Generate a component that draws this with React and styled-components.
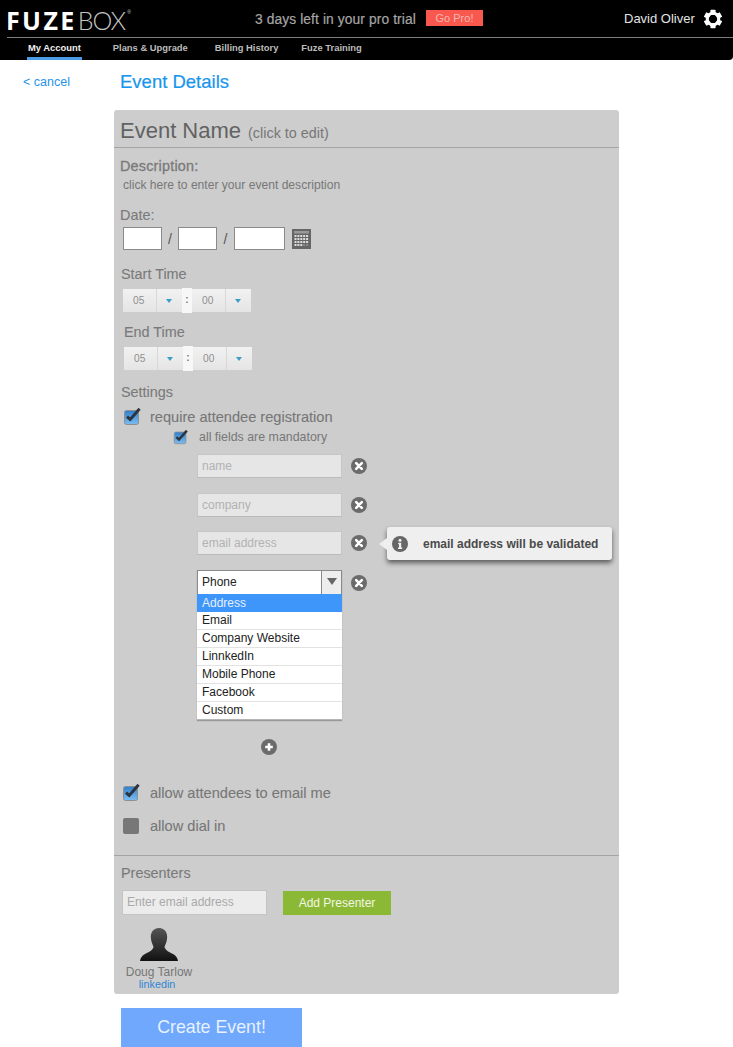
import React from "react";
import styled, { createGlobalStyle } from "styled-components";

const Global = createGlobalStyle`
  html, body { margin: 0; padding: 0; background: #fff; }
  body { font-family: "Liberation Sans", Arial, sans-serif; overflow-x: hidden; }
  * { box-sizing: border-box; }
`;

const Page = styled.div`
  width: 733px;
  height: 1047px;
  overflow: hidden;
  background: #fff;
`;

/* header */
const Header = styled.header`
  height: 60px;
  background: #000;
  border-bottom-right-radius: 4px;
  padding-left: 7px;
`;
const TopRow = styled.div`
  height: 38px;
  border-bottom: 1px solid #7d7d7d;
  display: flex;
  align-items: center;
`;
const Logo = styled.div`
  width: 248px;
  height: 38px;
  display: flex;
  align-items: center;
  font-size: 25px;
  line-height: 1;
  color: #fff;
  padding-top: 3px;
  margin-left: -1px;
  margin-right: 1px;
`;
const LogoBold = styled.span`
  font-family: "Open Sans", sans-serif;
  font-weight: 700;
  letter-spacing: 2.4px;
`;
const LogoLight = styled.span`
  font-family: Lato, sans-serif;
  font-weight: 300;
  color: #c4c4c4;
  font-size: 25px;
  letter-spacing: -1px;
  margin-left: 1px;
`;
const LogoMark = styled.sup`
  font-size: 5px;
  color: #ccc;
  align-self: flex-start;
  margin: 7px 0 0 2px;
`;
const Trial = styled.div`
  width: 171px;
  font-size: 13.8px;
  letter-spacing: 0.1px;
  font-weight: 400;
  color: #a5a5a5;
  white-space: nowrap;
  -webkit-text-stroke: 0.2px #a5a5a5;
  padding-top: 1px;
`;
const GoPro = styled.button`
  width: 57px;
  height: 16px;
  border: 0;
  padding: 0;
  background: #f8584e;
  color: #f5b7b2;
  font: 400 11px "Liberation Sans", sans-serif;
  margin-bottom: 1px;
`;
const UserName = styled.div`
  margin-left: 141px;
  width: 79px;
  color: #e4e4e4;
  font-size: 13px;
  white-space: nowrap;
`;
const Nav = styled.nav`
  height: 22px;
  display: flex;
  padding-left: 20px;
`;
const NavItem = styled.a`
  display: block;
  height: 22px;
  margin-right: ${(p) => p.$gap}px;
  padding: 0 1px;
  color: ${(p) => (p.$active ? "#f0f0f0" : "#bdbdbd")};
  font-size: 9.4px;
  font-weight: 700;
  line-height: 19px;
  white-space: nowrap;
  border-bottom: ${(p) => (p.$active ? "3px solid #4a9be8" : "0")};
`;

/* title row */
const TitleRow = styled.div`
  height: 50px;
  display: flex;
  align-items: center;
  padding-bottom: 6px;
`;
const Cancel = styled.a`
  margin-left: 23px;
  width: 97px;
  font-size: 12.5px;
  color: #1f94e6;
`;
const PageTitle = styled.h1`
  margin: 0;
  font-size: 18.5px;
  font-weight: 400;
  color: #1896ee;
  -webkit-text-stroke: 0.2px #1896ee;
`;

/* panel */
const Panel = styled.main`
  margin-left: 114px;
  width: 505px;
  height: 884px;
  background: #cdcdcd;
  border-radius: 3px;
  color: #777;
`;
const NameRow = styled.div`
  height: 38px;
  border-bottom: 1px solid #a4a4a4;
  padding-left: 6px;
  display: flex;
  align-items: baseline;
  gap: 7px;
  line-height: 42px;
`;
const EventName = styled.span`
  font-size: 22px;
  color: #626262;
`;
const ClickEdit = styled.span`
  font-size: 14.4px;
  color: #777;
`;
const Label = styled.div`
  margin-top: ${(p) => p.$top}px;
  margin-left: ${(p) => p.$left}px;
  height: 16px;
  font-size: 14.4px;
  line-height: 16px;
  letter-spacing: ${(p) => p.$track || 0}px;
  color: #7a7a7a;
  -webkit-text-stroke: ${(p) => (p.$track ? 0.3 : 0.1)}px #7a7a7a;
`;
const Hint = styled.div`
  margin: 4px 0 0 9px;
  font-size: 12.1px;
  line-height: 14px;
  color: #777;
`;
const DateRow = styled.div`
  margin: 4px 0 0 9px;
  height: 23px;
  display: flex;
  align-items: center;
`;
const DateBox = styled.div`
  width: ${(p) => p.$w}px;
  height: 23px;
  background: #fff;
  border: 1px solid #8a8a8a;
`;
const Slash = styled.span`
  width: ${(p) => p.$w}px;
  text-align: center;
  font-size: 14px;
  color: #555;
`;
const CalIcon = styled.svg`
  margin-left: 7px;
  width: 19px;
  height: 20px;
`;
const TimeRow = styled.div`
  margin: 6px 0 0 ${(p) => p.$left}px;
  height: 25px;
  width: 128px;
  display: flex;
  align-items: center;
`;
const TimeCell = styled.div`
  width: 33px;
  height: 23px;
  background: linear-gradient(#f1f1f1, #e5e5e5);
  padding-left: 10px;
  font-size: 10.2px;
  line-height: 23px;
  color: #8f8f8f;
`;
const TimeArrowCell = styled.div`
  width: 26px;
  height: 23px;
  background: linear-gradient(#f1f1f1, #e5e5e5);
  border-left: 1px solid #d8d8d8;
  display: flex;
  align-items: center;
  justify-content: center;
  padding-right: 2px;
`;
const TimeArrow = styled.i`
  width: 0;
  height: 0;
  border: 3.5px solid transparent;
  border-top: 4px solid #3b9ec8;
  border-bottom: 0;
`;
const TimeSep = styled.div`
  width: 10px;
  height: 25px;
  background: #f7f7f7;
  text-align: center;
  font-size: 10px;
  font-weight: 700;
  line-height: 23px;
  color: #777;
`;
const CheckRow = styled.div`
  margin: ${(p) => p.$top}px 0 0 ${(p) => p.$left}px;
  height: ${(p) => p.$h}px;
  display: flex;
  align-items: center;
`;
const CheckText = styled.span`
  margin-left: ${(p) => p.$gap}px;
  font-size: ${(p) => p.$size}px;
  color: #777;
  white-space: nowrap;
  -webkit-text-stroke: ${(p) => (p.$heavy ? "0.1px #777" : "0")};
`;
const FieldRow = styled.div`
  position: relative;
  margin: ${(p) => p.$top}px 0 0 83px;
  height: 24px;
  display: flex;
  align-items: center;
`;
const FieldBox = styled.div`
  width: 145px;
  height: 24px;
  background: #e6e6e6;
  border: 1px solid #c6c6c6;
  border-bottom-color: #bbb;
  padding-left: 4px;
  font-size: 12px;
  line-height: 22px;
  color: #b2b2b2;
`;
const RoundIcon = styled.svg`
  width: 16px;
  height: 16px;
  margin-left: ${(p) => p.$left || 0}px;
  margin-top: ${(p) => p.$top || 0}px;
  flex: none;
`;
const Tip = styled.div`
  position: absolute;
  left: 190px;
  top: -4px;
  width: 225px;
  height: 33px;
  border-radius: 3px;
  background: #efefef;
  box-shadow: 0 3px 5px rgba(0, 0, 0, 0.55);
  display: flex;
  align-items: center;
  padding-left: 5px;
  font-size: 12px;
  font-weight: 700;
  color: #4a4a4a;
  &::before {
    content: "";
    position: absolute;
    left: -8px;
    top: 11px;
    border: 6px solid transparent;
    border-left: 0;
    border-right: 8px solid #efefef;
  }
`;
const TipText = styled.span`
  margin-left: 15px;
  white-space: nowrap;
`;
const SelectBlock = styled.div`
  position: relative;
  margin: 15px 0 0 83px;
  display: flex;
  align-items: flex-start;
`;
const SelectCol = styled.div`
  width: 145px;
  box-shadow: 0 1px 1px rgba(0, 0, 0, 0.25);
`;
const SelectHead = styled.div`
  height: 24px;
  background: #fff;
  border: 1px solid #8a8a8a;
  border-bottom: 0;
  display: flex;
  align-items: center;
  font-size: 12px;
  color: #222;
  padding-left: 4px;
`;
const SelectValue = styled.span`
  flex: 1;
  padding-bottom: 1px;
`;
const SelectBtn = styled.div`
  width: 20px;
  height: 23px;
  background: #ededed;
  border-left: 1px solid #8a8a8a;
  display: flex;
  align-items: center;
  justify-content: center;
  padding-bottom: 3px;
  &::after {
    content: "";
    border: 5px solid transparent;
    border-top: 7px solid #666;
    border-bottom: 0;
  }
`;
const Option = styled.div`
  height: 18px;
  background: ${(p) => (p.$on ? "#3e95fa" : "#fff")};
  color: ${(p) => (p.$on ? "#e6f0fb" : "#222")};
  border-bottom: 1px solid ${(p) => (p.$on ? "#3e95fa" : "#e2e2e2")};
  font-size: 12px;
  line-height: ${(p) => (p.$on ? 18 : 17)}px;
  padding-left: 5px;
  &:last-child {
    border-bottom-color: #b5b5b5;
  }
`;
const PlusRow = styled.div`
  margin: 19px 0 0 147px;
  height: 16px;
  display: flex;
`;
const Divider = styled.div`
  margin-top: 20px;
  border-top: 1px solid #a4a4a4;
`;
const PresenterRow = styled.div`
  margin: 9px 0 0 8px;
  height: 25px;
  display: flex;
  align-items: center;
`;
const EmailBox = styled.div`
  width: 145px;
  height: 25px;
  background: #ececec;
  border: 1px solid #c4c4c4;
  padding-left: 4px;
  font-size: 12px;
  line-height: 23px;
  color: #a9a9a9;
`;
const AddBtn = styled.button`
  margin-left: 16px;
  width: 108px;
  height: 24px;
  border: 0;
  background: #8bb935;
  color: #f2f6e4;
  font: 400 12px "Liberation Sans", sans-serif;
`;
const Presenter = styled.div`
  margin: 12px 0 0 5px;
  width: 80px;
  display: flex;
  flex-direction: column;
  align-items: center;
`;
const Avatar = styled.svg`
  width: 40px;
  height: 34px;
`;
const PresenterName = styled.div`
  margin-top: 4px;
  font-size: 12px;
  line-height: 14px;
  color: #777;
`;
const PresenterLink = styled.a`
  margin-right: 4px;
  font-size: 10.8px;
  line-height: 11px;
  color: #2f86d4;
`;
const CreateBtn = styled.button`
  display: block;
  margin: 14px 0 0 121px;
  width: 181px;
  height: 39px;
  border: 0;
  background: #6fa8fd;
  color: #e8f1ff;
  font: 400 17.8px "Liberation Sans", sans-serif;
`;

const Gear = () => (
  <svg width="20" height="20" viewBox="0 0 20 20">
    <g fill="#fff">
      {[0, 60, 120, 180, 240, 300].map((a) => (
        <rect key={a} x="7.4" y="0.8" width="5.2" height="5" rx="0.6" transform={`rotate(${a} 10 10)`} />
      ))}
    </g>
    <circle cx="10" cy="10" r="5.8" fill="none" stroke="#fff" strokeWidth="3" />
  </svg>
);

const Check = ({ size }) => (
  <svg width={size} height={size} viewBox="0 0 18 18" style={{ flex: "none" }}>
    <defs>
      <linearGradient id="chk" x1="0" y1="0" x2="0" y2="1">
        <stop offset="0" stopColor="#2f7fce" />
        <stop offset="1" stopColor="#7dbdf0" />
      </linearGradient>
    </defs>
    <rect x="1.5" y="2.5" width="14" height="14" rx="2" fill="url(#chk)" stroke="#8f8f8f" />
    <path d="M4 8.6 L7.2 11.4 L16.6 0.8" fill="none" stroke="#2c3440" strokeWidth="3" />
  </svg>
);

const Unchecked = styled.span`
  display: block;
  width: 16px;
  height: 16px;
  border-radius: 2px;
  background: #777;
  flex: none;
`;

const XIcon = ({ left, top }) => (
  <RoundIcon $left={left} $top={top} viewBox="0 0 16 16">
    <circle cx="8" cy="8" r="8" fill="#6b6b6b" />
    <path d="M5.2 5.2 L10.8 10.8 M10.8 5.2 L5.2 10.8" stroke="#fff" strokeWidth="2.6" strokeLinecap="round" />
  </RoundIcon>
);
const PlusIcon = () => (
  <RoundIcon viewBox="0 0 16 16">
    <circle cx="8" cy="8" r="8" fill="#6b6b6b" />
    <path d="M8 4.2 V11.8 M4.2 8 H11.8" stroke="#fff" strokeWidth="2.6" />
  </RoundIcon>
);
const InfoIcon = () => (
  <RoundIcon viewBox="0 0 16 16">
    <circle cx="8" cy="8" r="8" fill="#666" />
    <circle cx="8" cy="4.2" r="1.5" fill="#efefef" />
    <path d="M6.2 6.8 H9.2 V11.6 H10.2 V13 H6 V11.6 H7 V8.2 H6.2 Z" fill="#efefef" />
  </RoundIcon>
);

const Calendar = () => (
  <CalIcon viewBox="0 0 19 20">
    <rect width="19" height="20" fill="#666" />
    <rect x="2" y="2" width="15" height="2.5" fill="#999" />
    {[0, 1, 2, 3].map((r) =>
      [0, 1, 2, 3, 4].map((c) => (
        <rect
          key={`${r}-${c}`}
          x={2.5 + c * 2.9}
          y={6 + r * 3}
          width="2"
          height="2"
          fill={r === 3 && c > 2 ? "#888" : "#ddd"}
        />
      ))
    )}
  </CalIcon>
);

const Time = ({ left }) => (
  <TimeRow $left={left}>
    <TimeCell>05</TimeCell>
    <TimeArrowCell>
      <TimeArrow />
    </TimeArrowCell>
    <TimeSep>:</TimeSep>
    <TimeCell>00</TimeCell>
    <TimeArrowCell>
      <TimeArrow />
    </TimeArrowCell>
  </TimeRow>
);

const options = ["Address", "Email", "Company Website", "LinnkedIn", "Mobile Phone", "Facebook", "Custom"];

export default function App() {
  return (
    <Page>
      <Global />
      <Header>
        <TopRow>
          <Logo>
            <LogoBold>FUZE</LogoBold>
            <LogoLight>BOX</LogoLight>
            <LogoMark>®</LogoMark>
          </Logo>
          <Trial>3 days left in your pro trial</Trial>
          <GoPro>Go Pro!</GoPro>
          <UserName>David Oliver</UserName>
          <Gear />
        </TopRow>
        <Nav>
          <NavItem $active $gap={30}>My Account</NavItem>
          <NavItem $gap={25}>Plans &amp; Upgrade</NavItem>
          <NavItem $gap={21}>Billing History</NavItem>
          <NavItem $gap={0}>Fuze Training</NavItem>
        </Nav>
      </Header>
      <TitleRow>
        <Cancel>&lt; cancel</Cancel>
        <PageTitle>Event Details</PageTitle>
      </TitleRow>
      <Panel>
        <NameRow>
          <EventName>Event Name</EventName>
          <ClickEdit>(click to edit)</ClickEdit>
        </NameRow>
        <Label $top={10} $left={6} $track={0.2}>Description:</Label>
        <Hint>click here to enter your event description</Hint>
        <Label $top={15} $left={6}>Date:</Label>
        <DateRow>
          <DateBox $w={39} />
          <Slash $w={16}>/</Slash>
          <DateBox $w={39} />
          <Slash $w={17}>/</Slash>
          <DateBox $w={51} />
          <Calendar />
        </DateRow>
        <Label $top={16} $left={7}>Start Time</Label>
        <Time left={9} />
        <Label $top={11} $left={10}>End Time</Label>
        <Time left={10} />
        <Label $top={13} $left={7}>Settings</Label>
        <CheckRow $top={8} $left={9} $h={18}>
          <Check size={18} />
          <CheckText $gap={9} $size={14.6} $heavy>require attendee registration</CheckText>
        </CheckRow>
        <CheckRow $top={3} $left={59} $h={16}>
          <Check size={15} />
          <CheckText $gap={11} $size={12.4}>all fields are mandatory</CheckText>
        </CheckRow>
        <FieldRow $top={9}>
          <FieldBox>name</FieldBox>
          <XIcon left={9} />
        </FieldRow>
        <FieldRow $top={15}>
          <FieldBox>company</FieldBox>
          <XIcon left={9} />
        </FieldRow>
        <FieldRow $top={14}>
          <FieldBox>email address</FieldBox>
          <XIcon left={9} />
          <Tip>
            <InfoIcon />
            <TipText>email address will be validated</TipText>
          </Tip>
        </FieldRow>
        <SelectBlock>
          <SelectCol>
            <SelectHead>
              <SelectValue>Phone</SelectValue>
              <SelectBtn />
            </SelectHead>
            {options.map((o, i) => (
              <Option key={o} $on={i === 0}>{o}</Option>
            ))}
          </SelectCol>
          <XIcon left={9} top={5} />
        </SelectBlock>
        <PlusRow>
          <PlusIcon />
        </PlusRow>
        <CheckRow $top={29} $left={8} $h={18}>
          <Check size={18} />
          <CheckText $gap={10} $size={14.6} $heavy>allow attendees to email me</CheckText>
        </CheckRow>
        <CheckRow $top={15} $left={9} $h={18}>
          <Unchecked />
          <CheckText $gap={11} $size={14.6} $heavy>allow dial in</CheckText>
        </CheckRow>
        <Divider />
        <Label $top={9} $left={7}>Presenters</Label>
        <PresenterRow>
          <EmailBox>Enter email address</EmailBox>
          <AddBtn>Add Presenter</AddBtn>
        </PresenterRow>
        <Presenter>
          <Avatar viewBox="0 0 40 34">
            <defs>
              <linearGradient id="av" x1="0" y1="0" x2="0" y2="1">
                <stop offset="0" stopColor="#555" />
                <stop offset="1" stopColor="#111" />
              </linearGradient>
            </defs>
            <path
              d="M20 1 C26 1 29 6 28 12 C27.5 16 26 18 25.5 20 C26 23 30 25 34 27 C37 28.5 38.5 31 39 34 H1 C1.5 31 3 28.5 6 27 C10 25 14 23 14.5 20 C14 18 12.5 16 12 12 C11 6 14 1 20 1 Z"
              fill="url(#av)"
            />
          </Avatar>
          <PresenterName>Doug Tarlow</PresenterName>
          <PresenterLink>linkedin</PresenterLink>
        </Presenter>
      </Panel>
      <CreateBtn>Create Event!</CreateBtn>
    </Page>
  );
}
